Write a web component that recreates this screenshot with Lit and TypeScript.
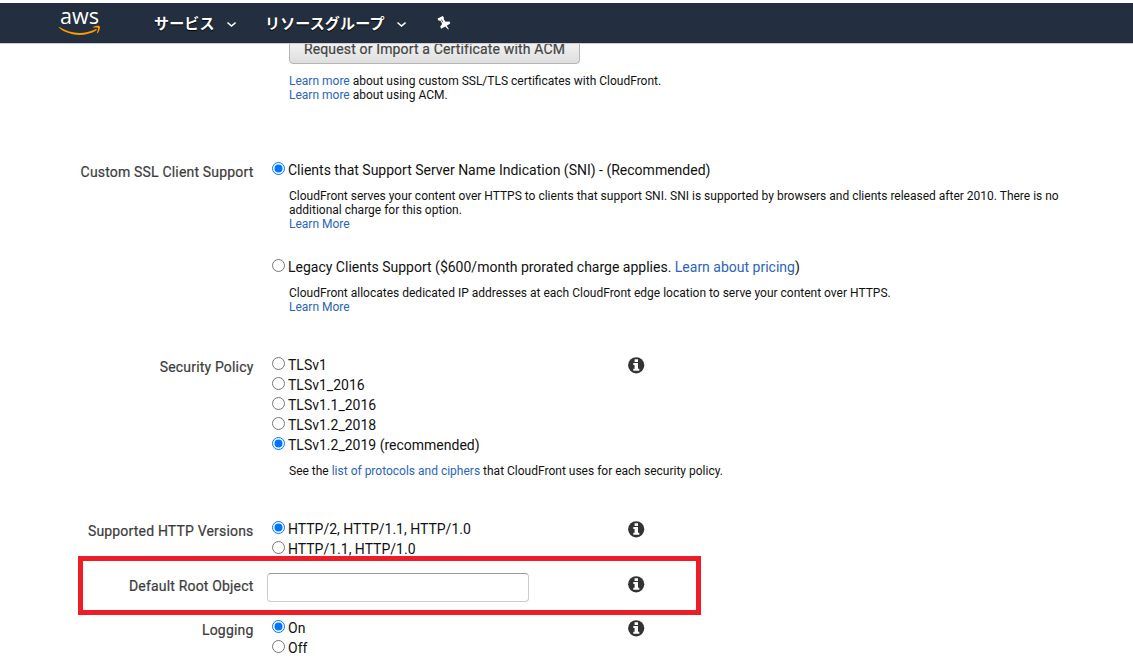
import { LitElement, html, css, svg } from "lit";
import { customElement, property } from "lit/decorators.js";

@customElement("info-icon")
class InfoIcon extends LitElement {
  static styles = css`
    :host { display: block; width: 17px; height: 17px; }
    svg { display: block; }
  `;
  render() {
    return html`<svg width="17" height="17" viewBox="0 0 17 17">
      <circle cx="8.2" cy="8.3" r="8.1" fill="#333" />
      <path d="M6.600 2.200h3.400v2.700H6.600zM5.300 6h4.700v5.800h1.300v2H5.300v-2h1.300V8H5.300z" fill="#fff" />
    </svg>`;
  }
}

@customElement("radio-option")
class RadioOption extends LitElement {
  @property({ type: Boolean }) checked = false;
  static styles = css`
    :host { display: flex; height: 20px; padding-left: 5px; gap: 3px; line-height: 20px; white-space: nowrap; }
    svg { display: block; flex: none; margin-top: 2px; }
  `;
  render() {
    return html`<svg width="13" height="13" viewBox="0 0 13 13">
        <circle cx="6.5" cy="6.5" r="6" fill="#fff" stroke=${this.checked ? "#0075ff" : "#767676"} />
        ${this.checked ? svg`<circle cx="6.5" cy="6.5" r="4" fill="#0075ff" />` : ""}
      </svg>
      <span><slot></slot></span>`;
  }
}

@customElement("form-row")
class FormRow extends LitElement {
  @property() label = "";
  @property({ type: Boolean }) info = false;
  static styles = css`
    :host { display: grid; grid-template-columns: 253px 361px 1fr; column-gap: 14px; align-items: start; }
    :host([wide]) { grid-template-columns: 253px 1fr; }
    .label { padding-top: 2px; margin-right: -0.5px; line-height: 20px; text-align: right; color: #3c3c3c; white-space: nowrap; letter-spacing: 0.18px; -webkit-text-stroke: 0.2px #3c3c3c; }
    info-icon { margin-top: 2px; margin-left: -14px; }
  `;
  render() {
    return html`<div class="label">${this.label}</div>
      <div><slot></slot></div>
      ${this.info ? html`<info-icon></info-icon>` : ""}`;
  }
}

@customElement("app-root")
class AppRoot extends LitElement {
  static styles = css`
    :host { display: block; position: relative; width: 1133px; height: 671px; overflow: hidden; background: #fff; color: #111; font: 14px/20px Roboto, "Noto Sans CJK JP", sans-serif; }
    .nav { position: relative; z-index: 1; box-sizing: border-box; height: 44px; border-top: 3px solid #fff; border-bottom: 1px solid #ccc9cf; background: #232f3e; display: flex; align-items: center; background-clip: padding-box; }
    .logo { margin: -3px 0 0 58px; display: block; flex: none; }
    .menu { color: #fff; font: 700 15px/20px "Noto Sans CJK JP", sans-serif; letter-spacing: 0.15px; text-shadow: 0 1px 1px #000; white-space: nowrap; }
    .services { margin-left: 50px; width: 61px; }
    .groups { margin-left: 29px; width: 120px; }
    .chev { margin-left: 11px; margin-top: 2px; flex: none; }
    .pin { margin-left: 31px; flex: none; }
    a { color: #2a65b8; text-decoration: none; }
    .help { margin: 9px 0 0 22px; font-size: 12px; line-height: 14px; white-space: nowrap; }
    .acm { box-sizing: border-box; margin: -10px 0 0 22px; width: 291px; height: 30px; border: 1px solid #b5b5b5; border-radius: 4px; background: linear-gradient(#fafafa, #dedede); color: #444; letter-spacing: 0.15px; -webkit-text-stroke: 0.2px #444; text-align: center; line-height: 28px; }
    .intro { margin-top: 10px; }
    .ssl { margin-top: 58px; }
    .legacy { margin-top: 26px; }
    .policy, .http { margin-top: 41px; }
    .root { margin-top: 15px; }
    .log { margin-top: 16px; }
    .field { box-sizing: border-box; display: block; width: 262px; height: 29px; border: 1px solid #ccc; border-top-color: #999; border-radius: 4px; background: #fff; padding: 0 6px; margin: -1px 0 0; font: inherit; }
    .highlight { position: absolute; box-sizing: border-box; left: 78px; top: 556px; width: 623px; height: 59px; border: 5px solid #ee1c24; }
  `;
  render() {
    const chevron = html`<svg class="chev" width="10" height="7" viewBox="0 0 10 7"><path d="M1.500 1.500 5.500 5 9.500 1.500" fill="none" stroke="#fff" stroke-width="1.6" /></svg>`;
    return html`
      <div class="nav">
        <svg class="logo" width="46" height="43" viewBox="58 0 46 43">
          <text x="60" y="23.5" textLength="39" lengthAdjust="spacingAndGlyphs" font-family="Open Sans" font-size="21.500" font-weight="500" fill="#fff">aws</text>
          <path d="M59.3 27c11.500 7.200 25 7.700 36.200 2.200 1-.4 1.700.5.800 1.200C85.500 37 69 36.500 59 27.800c-.5-.5-.2-1.100.3-.8z" fill="#f90" />
          <path d="M93.300 27c2-1.500 5.600-1.500 6.400-.8.700.8-.1 5-2.200 7.100-.4.300-.8.100-.6-.4.6-1.500 1.500-4.200 1-4.900-.5-.6-3-.4-4.300-.3-.5 0-.7-.4-.3-.7z" fill="#f90" />
        </svg>
        <span class="menu services">サービス</span>${chevron}
        <span class="menu groups">リソースグループ</span>${chevron}
        <svg class="pin" width="14" height="16" viewBox="0 0 14 16"><path d="M.6 3.600 5.800.9 7 2.700 6.700 4.200 8.600 6.800 12.600 6.600 13.200 8.600 9.700 10.700 11.800 14 11.200 14.600 8.200 11.500 4.100 13.700 3.200 11.600 5.200 9 3.500 5.700 1.300 5.500z" fill="#fff" /><path d="m4.300 4.500 1.600 2.800" stroke="#232f3e" stroke-width=".8" /></svg>
      </div>
      <form-row wide>
        <div class="acm">Request or Import a Certificate with ACM</div>
        <div class="help intro"><a>Learn more</a> about using custom SSL/TLS certificates with CloudFront.<br /><a>Learn more</a> about using ACM.</div>
      </form-row>
      <form-row wide class="ssl" label="Custom SSL Client Support">
        <radio-option checked>Clients that Support Server Name Indication (SNI) - (Recommended)</radio-option>
        <div class="help">CloudFront serves your content over HTTPS to clients that support SNI. SNI is supported by browsers and clients released after 2010. There is no<br />additional charge for this option.<br /><a>Learn More</a></div>
        <radio-option class="legacy">Legacy Clients Support ($600/month prorated charge applies. <a>Learn about pricing</a>)</radio-option>
        <div class="help">CloudFront allocates dedicated IP addresses at each CloudFront edge location to serve your content over HTTPS.<br /><a>Learn More</a></div>
      </form-row>
      <form-row info class="policy" label="Security Policy">
        <radio-option>TLSv1</radio-option>
        <radio-option>TLSv1_2016</radio-option>
        <radio-option>TLSv1.1_2016</radio-option>
        <radio-option>TLSv1.2_2018</radio-option>
        <radio-option checked>TLSv1.2_2019 (recommended)</radio-option>
        <div class="help">See the <a>list of protocols and ciphers</a> that CloudFront uses for each security policy.</div>
      </form-row>
      <form-row info class="http" label="Supported HTTP Versions">
        <radio-option checked>HTTP/2, HTTP/1.1, HTTP/1.0</radio-option>
        <radio-option>HTTP/1.1, HTTP/1.0</radio-option>
      </form-row>
      <form-row info class="root" label="Default Root Object">
        <input class="field" type="text" aria-label="Default Root Object" />
      </form-row>
      <form-row info class="log" label="Logging">
        <radio-option checked>On</radio-option>
        <radio-option>Off</radio-option>
      </form-row>
      <div class="highlight"></div>
    `;
  }
}
